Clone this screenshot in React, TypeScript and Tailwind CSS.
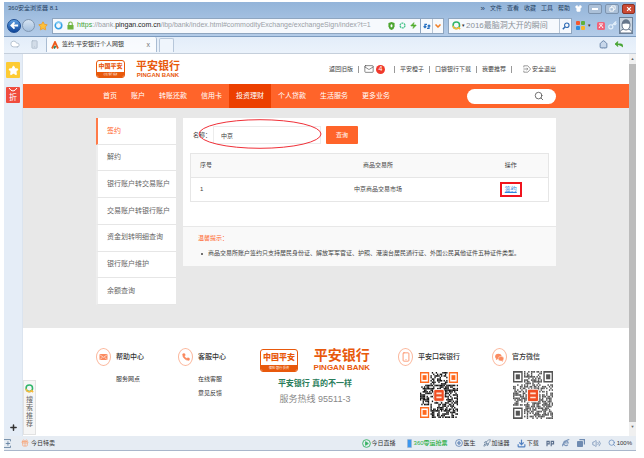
import React from "react";
import {
  Mail,
  Search,
  ChevronDown,
  Smartphone,
  Star,
  Gift,
  Phone,
  Download,
  Volume2,
  Rocket,
  Home,
  Reply,
  Shirt,
  Cloud,
  Plus,
  Zap,
  Key,
} from "lucide-react";

function BoxLogo({ large = false }: { large?: boolean }) {
  return (
    <span
      className={
        "flex shrink-0 flex-col justify-between overflow-hidden rounded-[3px] border border-[#e8590c] bg-white text-center font-black text-[#e8590c] " +
        (large ? "h-[23px] w-[38px]" : "h-[18px] w-[29px]")
      }
    >
      <span className={large ? "text-[8px] leading-[15px]" : "text-[6px] leading-[11px]"}>中国平安</span>
      <span
        className={
          "bg-[#e8590c] font-normal text-white " + (large ? "text-[3px] leading-[7px]" : "text-[2px] leading-[5px]")
        }
      >
        保险·银行·投资
      </span>
    </span>
  );
}

function BankName({ large = false }: { large?: boolean }) {
  return (
    <span className="flex flex-col items-center font-bold text-[#e8590c]">
      <span className={large ? "text-[14px] leading-[15px]" : "text-[11px] leading-[12px]"}>平安银行</span>
      <span className={large ? "text-[8px] leading-[9px]" : "text-[6px] leading-[7px]"}>PINGAN BANK</span>
    </span>
  );
}

function Ring({ children }: { children: React.ReactNode }) {
  return (
    <span className="flex h-[18px] w-[15px] shrink-0 items-center justify-center rounded-[50%] border border-[#fbb79c] text-[#fb8a5f]">
      {children}
    </span>
  );
}

function Envelope() {
  return (
    <svg viewBox="0 0 12 9" className="h-[6px] w-[9px]">
      <rect width="12" height="9" rx="1" fill="#fb8a5f" />
      <path d="M1 1.500l5 3.500l5-3.500M1 8l3.500-3M11 8L7.500 5" fill="none" stroke="#fff" strokeWidth=".9" />
    </svg>
  );
}

const QR_SIZE = 29;

function qrCells(seed: number) {
  const cells: [number, number][] = [];
  let s = seed;
  for (let y = 0; y < QR_SIZE; y++) {
    for (let x = 0; x < QR_SIZE; x++) {
      s = (s * 1103515245 + 12345) % 2147483648;
      const finder = (x < 8 && y < 8) || (x > QR_SIZE - 9 && y < 8) || (x < 8 && y > QR_SIZE - 9);
      if (!finder && s / 2147483648 > 0.47) cells.push([x, y]);
    }
  }
  return cells;
}

function QrCode({ seed, dark, finder, className, label }: { seed: number; dark: string; finder: string; className: string; label: string }) {
  const corners = [
    [0, 0],
    [QR_SIZE - 7, 0],
    [0, QR_SIZE - 7],
  ];
  return (
    <svg viewBox="0 0 29 29" preserveAspectRatio="none" className={className} role="img" aria-label={label}>
      {qrCells(seed).map(([x, y]) => (
        <rect key={x + "-" + y} x={x} y={y} width="1" height="1" fill={dark} />
      ))}
      {corners.map(([x, y]) => (
        <g key={x + "-" + y} fill={finder}>
          <path fillRule="evenodd" d={`M${x} ${y}h7v7h-7zM${x + 1} ${y + 1}v5h5v-5z`} />
          <rect x={x + 2} y={y + 2} width="3" height="3" />
        </g>
      ))}
      <rect x="10.5" y="11" width="8" height="7.5" rx="1" fill="#f04e23" stroke="#fff" strokeWidth=".6" />
      <path d="M12.5 13.5h4M12.5 16h4" stroke="#ffe0d0" strokeWidth="1" />
    </svg>
  );
}

function BrowserRing() {
  return (
    <svg viewBox="0 0 10 10" className="size-[9px] shrink-0">
      <circle cx="5" cy="5" r="3.6" fill="none" stroke="#36a1e6" strokeWidth="1.8" />
      <path d="M2 3A3.6 3.6 0 0 1 8 3" fill="none" stroke="#7cc9f3" strokeWidth="1.8" />
    </svg>
  );
}

function QLogo() {
  return (
    <svg viewBox="0 0 10 10" className="size-[9px] shrink-0" fill="none" strokeWidth="1.7">
      <circle cx="4.8" cy="4.8" r="3.6" stroke="#2fb56a" />
      <path d="M1.2 5.2A3.6 3.6 0 0 0 8 6.6M7 7l2 2" stroke="#f6b93b" />
    </svg>
  );
}

function TitleBar() {
  return (
    <div className="flex h-[13px] items-center pr-px pl-1 text-[6px] text-[#24405f]">
      <span className="grow">360安全浏览器 8.1</span>
      <div className="flex items-center gap-[5px]">
        <span className="text-[8px]">»</span>
        {["文件", "查看", "收藏", "工具", "帮助"].map((m) => (
          <button key={m}>{m}</button>
        ))}
        <Shirt className="size-[7px] text-white" fill="white" />
      </div>
      <div className="ml-1.5 flex h-[10px] gap-[3px] text-white">
        <button aria-label="最小化" className="flex w-[14px] items-center justify-center rounded-[2px] border border-[#7c93ae] bg-[#abc0d8]">
          <span className="h-0.5 w-1.5 bg-white" />
        </button>
        <button aria-label="还原" className="flex w-[14px] items-center justify-center rounded-[2px] border border-[#7c93ae] bg-[#abc0d8]">
          <svg viewBox="0 0 8 8" className="size-[7px]" fill="none" stroke="#fff">
            <path d="M3 2.500V1h4v4H5.500M1 3h4v4H1z" />
          </svg>
        </button>
        <button aria-label="关闭" className="flex w-[13px] items-center justify-center rounded-[2px] border border-[#8c3326] bg-[#cb4a35]">
          <svg viewBox="0 0 8 8" className="size-[6px]" stroke="#fff" strokeWidth="1.6">
            <path d="M1.500 1.500l5 5M6.500 1.500l-5 5" />
          </svg>
        </button>
      </div>
    </div>
  );
}

function AddressRow() {
  return (
    <div className="flex h-[21px] items-center pr-[3px] pl-[3px]">
      <button aria-label="后退" className="flex size-[14px] shrink-0 items-center justify-center rounded-full border border-[#1b4c93] bg-linear-to-b from-[#5fa0e2] to-[#0d4499]">
        <svg viewBox="0 0 10 10" className="size-[9px]" stroke="#fff" strokeWidth="2" fill="none">
          <path d="M9 5H2M5 1.500L1.500 5L5 8.500" />
        </svg>
      </button>
      <button aria-label="前进" className="ml-px size-[13px] shrink-0 rounded-full border border-[#8097b2] bg-linear-to-b from-[#d5e3f2] to-[#a4bfdd]" />
      <Star className="ml-[3px] size-[10px] shrink-0 text-[#ee9b23]" fill="#fdc03a" />
      <div className="ml-1 flex h-[16px] min-w-0 grow items-center border border-[#8fa6c0] bg-[#f6f9fd]">
        <span className="mx-px flex"><BrowserRing /></span>
        <svg viewBox="0 0 8 10" className="ml-[3px] h-[9px] w-[7px] shrink-0">
          <path d="M2 5V3a2 2 0 0 1 4 0v2" fill="none" stroke="#7cba4a" strokeWidth="1.300" />
          <rect x=".5" y="4.500" width="7" height="5" rx=".6" fill="#6db33f" />
        </svg>
        <span className="ml-[3px] min-w-0 grow text-[7px] whitespace-nowrap text-[#9a9fa6]">
          <span className="text-[#3fa535]">https</span>://bank.<span className="text-[#222]">pingan.com.cn</span>
          /ibp/bank/index.html#commodityExchange/exchangeSign/index?t=1
        </span>
        <span className="flex shrink-0 items-center gap-1 pr-[3px]">
          <svg viewBox="0 0 8 9" className="h-[8px] w-[7px]">
            <path d="M4 0l3.500 1v4Q7 8 4 9Q1 8 .5 5V1z" fill="#4ca52f" />
            <rect x="3" y="2.500" width="2" height="3.500" rx="1" fill="#fff" />
          </svg>
          <svg viewBox="0 0 8 8" className="size-[7px]">
            <circle cx="4" cy="4" r="2.800" fill="none" stroke="#42c287" strokeWidth="1.500" strokeDasharray="2.200 .7" />
          </svg>
          <Zap className="size-[7px] text-[#52ae2f]" fill="#52ae2f" />
        </span>
        <button aria-label="刷新" className="flex h-full w-[12px] shrink-0 items-center justify-center border-l border-[#8fa6c0]">
          <svg viewBox="0 0 10 10" className="size-[8px]" fill="none" stroke="#2871c2" strokeWidth="1.600">
            <path d="M5 3H2.500v4M.8 5.300L2.500 7l1.700-1.700M5 8h2.500V4M5.800 5.500L7.500 3.800l1.700 1.700" />
          </svg>
        </button>
        <button aria-label="展开" className="flex h-full w-[11px] shrink-0 items-center justify-center border-l border-[#b7c5d5] text-[#f0802a]">
          <ChevronDown className="size-[8px]" strokeWidth={5} />
        </button>
      </div>
      <div className="ml-1 flex h-[16px] w-[124px] shrink-0 items-center border border-[#8fa6c0] bg-[#f6f9fd] pl-[3px]">
        <QLogo />
        <span className="mx-px text-[5px] text-[#333]">▾</span>
        <input aria-label="搜索" defaultValue="2016最脑洞大开的瞬间" className="min-w-0 grow bg-transparent text-[8px] text-[#8b9199] outline-none" />
        <button aria-label="搜索" className="flex h-full w-[12px] shrink-0 items-center justify-center border-l border-[#b7c5d5] text-[#2f6bb4]">
          <svg viewBox="0 0 10 10" className="size-[8px]" fill="none" stroke="currentColor">
            <circle cx="6" cy="4" r="2.800" strokeWidth="1.400" />
            <path d="M4 6L1 9" strokeWidth="1.800" />
          </svg>
        </button>
      </div>
      <div className="ml-1 flex shrink-0 items-center">
        <span className="grid size-[9px] grid-cols-2 gap-px">
          <span className="rounded-[1px] bg-[#f4582e]" />
          <span className="rounded-[1px] bg-[#5fb13c]" />
          <span className="rounded-[1px] bg-[#2c8ee0]" />
          <span className="rounded-[1px] bg-[#f8b62c]" />
        </span>
        <span className="mx-[3px] text-[5px] text-[#333]">▾</span>
        <svg viewBox="0 0 8 8" className="ml-[3px] size-[8px]">
          <rect width="8" height="8" rx="1.500" fill="#f0647c" />
          <path d="M2 2h4M2 6l2-3l2 3" fill="none" stroke="#fff" />
        </svg>
        <Key className="ml-[3px] size-[9px] text-[#e4f0fb]" strokeWidth={3} />
        <span className="ml-[2px] flex h-[17px] w-[14px] items-center justify-center border border-[#6b8098] bg-[#c9d4e0]">
          <svg viewBox="0 0 12 14" className="h-[14px] w-[12px]">
            <path d="M0 14q0-4 6-4t6 4z" fill="#fff" stroke="#65758a" />
            <ellipse cx="6" cy="6" rx="4" ry="5" fill="#fff" stroke="#65758a" />
            <path d="M2 5q0-4.500 4-4.500T10 5q-4-1-8 0" fill="#65758a" />
          </svg>
        </span>
      </div>
    </div>
  );
}

function TabRow() {
  return (
    <div className="flex h-[16px] items-end border-t border-[#7d9cc0] bg-linear-to-b from-[#e3edf9] to-[#eaf2fb]">
      <Cloud className="mb-[3px] ml-[6px] size-[10px] text-[#a9b8c8]" fill="white" />
      <Smartphone className="mb-[3px] ml-[10px] size-[9px] text-[#a9b8c8]" fill="#d2dce8" />
      <div className="ml-[7px] flex h-full w-[111px] items-center rounded-t-[2px] border-x border-[#a9bcd2] bg-white/70 pr-1.5 pl-1">
        <svg viewBox="0 0 8 8" className="size-[8px]" fill="none" strokeWidth="1.800">
          <path d="M1 7.500L4 1l3 6.500" stroke="#ee5a1c" />
          <path d="M3 7.500L4.500 5" stroke="#2a7d5b" />
        </svg>
        <span className="ml-[3px] grow text-[6px] text-[#333]">签约-平安银行个人网银</span>
        <button aria-label="关闭标签页" className="text-[7px] leading-none text-[#777]">x</button>
      </div>
      <button aria-label="新标签页" className="ml-0.5 h-[14px] w-[15px] rounded-t-[2px] border border-b-0 border-[#b7c7da] bg-[#eff5fc]" />
      <span className="grow" />
      <Home className="mb-[3px] size-[9px] text-[#4c6c96]" fill="#c8d7ea" />
      <Reply className="mr-[12px] mb-[3px] ml-[6px] size-[10px] text-[#49a535]" fill="#49a535" strokeWidth={3} />
    </div>
  );
}

function SideRail() {
  return (
    <aside className="flex w-[19px] shrink-0 flex-col items-start border-r border-[#dbe4ef] bg-[#e5edf7] pt-2 pl-0.5">
      <button aria-label="收藏" className="flex h-[16px] w-[14px] items-center justify-center rounded-[1px] bg-[#fdcb33]">
        <Star className="size-[11px] text-white" fill="white" />
      </button>
      <button className="mt-[9px] flex h-[16px] w-[14px] flex-col items-center rounded-[1px] bg-[#f04c3e] text-[8px] leading-[9px] text-white">
        <svg viewBox="0 0 12 6" className="h-[6px] w-[12px]" fill="none" stroke="#fff">
          <path d="M2 1q4 6 8 0" />
        </svg>
        折
      </button>
      <span className="grow" />
      <button aria-label="添加" className="mb-1 flex h-[10px] w-[14px] items-center justify-center text-[#333]">
        <Plus className="size-[9px]" strokeWidth={4} />
      </button>
    </aside>
  );
}

const Sep = () => <span className="h-[7px] w-px bg-[#999]" />;

function PageHeader() {
  return (
    <header className="bg-white">
      <div className="mx-auto flex h-[30px] w-full max-w-[460px] items-center">
        <BoxLogo />
        <span className="ml-[11px]"><BankName /></span>
        <div className="ml-auto flex items-center gap-[5px] text-[6px] whitespace-nowrap text-[#444]">
          <a href="#old">返回旧版</a>
          <Sep />
          <a href="#mail" aria-label="消息 4" className="mr-1 flex items-center gap-0.5">
            <Mail className="size-[10px]" strokeWidth={1.5} />
            <span className="flex size-[9px] items-center justify-center rounded-full bg-[#f0392b] text-[7px] text-white">4</span>
          </a>
          <Sep />
          <a href="#orange">平安橙子</a>
          <Sep />
          <a href="#app">口袋银行下载</a>
          <Sep />
          <a href="#share">我要推荐</a>
          <Sep />
          <a href="#exit" className="ml-1.5 flex items-center gap-px">
            <svg viewBox="0 0 10 10" className="size-[8px]" fill="none" stroke="#777" strokeWidth=".9">
              <path d="M1 3V1h5l3.500 4L6 9H1V7M.5 5H6M4.500 3.500L6 5L4.500 6.500" />
            </svg>
            安全退出
          </a>
        </div>
      </div>
    </header>
  );
}

const NAV = ["首页", "账户", "转账还款", "信用卡", "投资理财", "个人贷款", "生活服务", "更多业务"];

function Nav() {
  return (
    <nav className="bg-[#ff642a]">
      <div className="mx-auto flex h-[24px] w-full max-w-[460px] items-center text-[7px] whitespace-nowrap text-white">
        {NAV.map((n) => (
          <a key={n} href="#nav" className={"flex h-full items-center px-[7px] " + (n === "投资理财" ? "bg-[#ec4000]" : "")}>
            {n}
          </a>
        ))}
        <div className="ml-auto flex h-[15px] w-[89px] items-center rounded-full bg-white pr-3 pl-2">
          <input aria-label="站内搜索" className="min-w-0 grow text-[7px] text-[#333] outline-none" />
          <Search className="size-[10px] shrink-0 text-[#555]" />
        </div>
      </div>
    </nav>
  );
}

const MENU = ["签约", "解约", "银行账户转交易账户", "交易账户转银行账户", "资金划转明细查询", "银行账户维护", "余额查询"];

function Content() {
  return (
    <div className="grow bg-[#e8e8e8]">
      <div className="mx-auto flex w-full max-w-[460px] items-start gap-[7px] py-[10px]">
        <ul className="grid h-[187px] w-[80px] shrink-0 auto-rows-fr bg-white text-[7px] text-[#666]">
          {MENU.map((m) => (
            <li
              key={m}
              className={
                "flex border-b border-l-2 border-b-[#e6e6e6] " +
                (m === "签约" ? "border-l-[#ff7a48] text-[#ff642a]" : "border-l-[#eeeeee]")
              }
            >
              <a href="#menu" className="flex grow items-center pl-[9px] whitespace-nowrap">{m}</a>
            </li>
          ))}
        </ul>
        <main className="min-w-0 grow bg-white text-[6px] text-[#444]">
          <form className="relative flex items-center px-[7px] pt-2" onSubmit={(e) => e.preventDefault()}>
            <label htmlFor="name" className="w-[23px] pl-[3px] whitespace-nowrap">名称：</label>
            <input id="name" defaultValue="中京" className="h-[18px] w-[108px] border border-[#ececec] px-[7px] outline-none" />
            <button className="ml-[5px] h-[18px] w-[32px] rounded-[1px] bg-[#ff642a] text-white">查询</button>
            <svg viewBox="0 0 124 30" className="pointer-events-none absolute top-px left-[15px] h-[30px] w-[124px]">
              <ellipse cx="62" cy="15" rx="61" ry="14.300" fill="none" stroke="#f03038" />
            </svg>
          </form>
          <div className="px-[7px] pt-[9px] pb-[24px]">
            <table className="w-full table-fixed border border-[#e6e6e6] text-center">
              <thead>
                <tr className="h-[24px] border-b border-[#e6e6e6] bg-[#f9f9f9]">
                  <th className="w-[92px] pl-[9px] text-left font-normal">序号</th>
                  <th className="font-normal">商品交易所</th>
                  <th className="w-[75px] font-normal">操作</th>
                </tr>
              </thead>
              <tbody>
                <tr className="h-[24px]">
                  <td className="pl-[9px] text-left">1</td>
                  <td>中京商品交易市场</td>
                  <td>
                    <a href="#sign" className="mx-auto flex h-[15px] w-[22px] items-center justify-center border-2 border-[#f0141e] text-[#2f86dc] underline">
                      签约
                    </a>
                  </td>
                </tr>
              </tbody>
            </table>
          </div>
          <section className="border-t border-[#e8e8e8] bg-[#f9f9f9] px-[15px] pt-[4px] pb-[5px] leading-[15px]">
            <h2 className="text-[#ff642a]">温馨提示：</h2>
            <ul className="list-none">
              <li className="flex items-center gap-[5px] pl-[3px] whitespace-nowrap">
                <span className="size-0.5 rounded-full bg-[#444]" />
                商品交易所账户签约只支持居民身份证、解放军军官证、护照、港澳台居民通行证、外国公民其他证件五种证件类型。
              </li>
            </ul>
          </section>
        </main>
      </div>
    </div>
  );
}

function FooterTitle({ icon, children }: { icon: React.ReactNode; children: React.ReactNode }) {
  return (
    <h3 className="flex items-center gap-[5px] text-[7px] font-medium whitespace-nowrap text-[#333]">
      <Ring>{icon}</Ring>
      {children}
    </h3>
  );
}

function PageFooter() {
  return (
    <footer className="bg-white">
      <div className="mx-auto grid h-[108px] w-full max-w-[460px] grid-cols-[82fr_82fr_138fr_94fr_64fr] pt-[20px]">
        <div>
          <FooterTitle icon={<Envelope />}>帮助中心</FooterTitle>
          <div className="mt-[6px] pl-[20px] text-[6px] leading-[14px] text-[#333]">
            <a href="#branch">服务网点</a>
          </div>
        </div>
        <div>
          <FooterTitle icon={<Phone className="size-[8px]" fill="#fb8a5f" />}>客服中心</FooterTitle>
          <div className="mt-[6px] flex flex-col pl-[20px] text-[6px] leading-[14px] text-[#333]">
            <a href="#service">在线客服</a>
            <a href="#feedback">意见反馈</a>
          </div>
        </div>
        <div className="w-[110px]">
          <div className="flex items-center justify-between">
            <BoxLogo large />
            <BankName large />
          </div>
          <p className="mt-[4px] text-center text-[8px] leading-[16px] font-bold text-[#2a7d5b]">平安银行 真的不一样</p>
          <p className="text-center text-[9px] leading-[15px] text-[#888]">服务热线 95511-3</p>
        </div>
        <div>
          <FooterTitle icon={<Smartphone className="size-[10px]" />}>平安口袋银行</FooterTitle>
          <QrCode seed={7} dark="#111" finder="#ff6a1f" label="平安口袋银行二维码" className="mt-[6px] ml-[22px] h-[46px] w-[38px]" />
        </div>
        <div>
          <FooterTitle
            icon={
              <svg viewBox="0 0 12 12" className="size-[9px]" fill="currentColor">
                <ellipse cx="4.500" cy="4.500" rx="4.300" ry="3.600" />
                <ellipse cx="8" cy="7.500" rx="3.700" ry="3.100" stroke="#fff" strokeWidth=".6" />
                <path d="M1.500 7l-.3 2.400L4 8zM10 9.500l.8 2L8 10.400z" />
              </svg>
            }
          >
            官方微信
          </FooterTitle>
          <QrCode seed={91} dark="#555" finder="#555" label="官方微信二维码" className="mt-[5px] ml-[21px] h-[48px] w-[40px]" />
        </div>
      </div>
    </footer>
  );
}

function StatusBar() {
  return (
    <div className="flex h-[15px] items-center border-b border-[#a9b6cb] bg-[#e6ecf3] pr-1 text-[6px] whitespace-nowrap text-[#333]">
      <svg viewBox="0 0 8 10" className="h-[9px] w-[7px]" fill="none" stroke="#64809f">
        <path d="M0 .5h7.500M0 9.500h7.500M7.500.5v2M7.500 9.500v-2M2 5h5M4.500 2.500v5" />
      </svg>
      <button className="ml-[10px] flex items-center gap-[2px]">
        <Gift className="size-[8px] text-[#f9a06f]" />
        今日特卖
      </button>
      <span className="grow" />
      <div className="flex items-center gap-[7px]">
        <button className="mr-1 flex items-center gap-px">
          <svg viewBox="0 0 10 10" className="size-[9px]" fill="none" stroke="#35b362">
            <circle cx="5" cy="5" r="4.300" />
            <path d="M4 3l3 2l-3 2z" fill="#35b362" />
          </svg>
          今日直播
        </button>
        <button className="flex items-center gap-[2px] font-medium text-[#25ad3c]">
          <span className="h-[9px] w-[5px] rounded-[1px] border border-[#9bb8d8] bg-[#3b97ef]" />
          360零运抢票
        </button>
        <button className="flex items-center gap-px">
          <svg viewBox="0 0 10 10" className="size-[8px]" fill="none" stroke="#5d81b4">
            <circle cx="5" cy="5" r="4.300" />
            <path d="M5 2.500v5M2.500 5h5" strokeWidth="1.500" />
          </svg>
          医生
        </button>
        <button className="flex items-center gap-px">
          <Rocket className="size-[8px] text-[#5b7594]" />
          加速器
        </button>
        <button className="flex items-center gap-px">
          <Download className="size-[9px] text-[#4f7fc0]" strokeWidth={3} />
          下载
        </button>
        <svg viewBox="0 0 10 8" className="h-[7px] w-[9px]" fill="none" stroke="#5b6f8d" strokeWidth="1.300">
          <path d="M1 7V1.500h2.500v3H1M5.800 7V1.500h2.700v3H5.800" />
        </svg>
        <svg viewBox="0 0 10 10" className="size-[8px]" fill="none" stroke="#7d97bb" strokeWidth="1.500">
          <path d="M2.500 5h5.300A2.900 2.900 0 1 0 7.300 7M1 9Q0 7 4 3.500T9 1" />
        </svg>
        <svg viewBox="0 0 10 10" className="size-[8px]" fill="#6f8bb1">
          <path d="M3 0h7v7H8.500V1.500H3z" />
          <rect y="2.500" width="7.500" height="7.500" rx="1" />
        </svg>
        <Volume2 className="size-[9px] text-[#6f8bb1]" />
        <span className="flex items-center gap-px">
          <Search className="size-[8px] text-[#5b82b8]" />
          100%
        </span>
      </div>
    </div>
  );
}

export default function App() {
  return (
    <div className="min-h-screen bg-white pt-0.5 pr-2 pb-[7px] pl-1 font-['Liberation_Sans','Noto_Sans_CJK_SC',sans-serif]">
      <div className="flex flex-col">
        <div className="bg-linear-to-b from-[#93b4d9] to-[#b4cce8]">
          <TitleBar />
          <AddressRow />
        </div>
        <TabRow />
        <div className="h-0.5 border-b border-[#c5cfdb] bg-[#eaf2fb]" />
        <div className="flex">
          <SideRail />
          <div className="relative flex min-h-[382px] min-w-0 grow flex-col">
            <PageHeader />
            <Nav />
            <Content />
            <PageFooter />
            <button className="absolute bottom-px left-0 flex w-[13px] flex-col items-center border border-[#e2e2e2] bg-[#f6f6f6] py-[3px] text-[7px] leading-[8px] text-[#666]">
              <QLogo />
              <span className="mt-[3px] w-[7px] pb-[3px]">搜索推荐</span>
            </button>
          </div>
          <div className="flex w-[7px] shrink-0 flex-col items-center bg-[#f0f0f0] text-[4px] leading-[10px] text-[#666]">
            <span>▲</span>
            <span className="w-full grow bg-[#bcbcbc]" />
            <span className="h-[14px]">▼</span>
          </div>
        </div>
        <StatusBar />
      </div>
    </div>
  );
}
